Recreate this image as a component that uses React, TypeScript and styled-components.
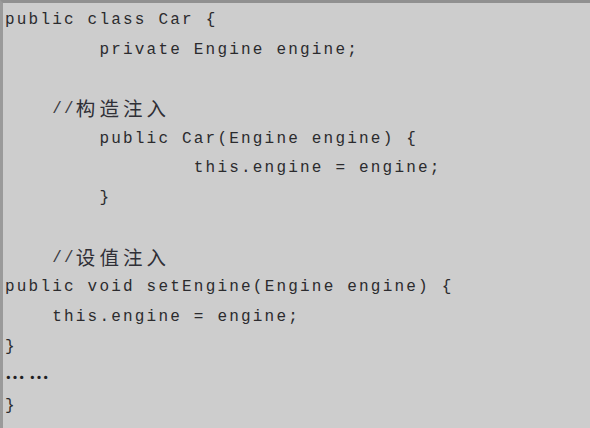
import React from "react";
import styled, { createGlobalStyle } from "styled-components";

const GlobalStyle = createGlobalStyle`
  html, body {
    margin: 0;
    padding: 0;
    background: #cccccc;
  }
  #root {
    width: 590px;
    height: 428px;
  }
`;

const CodeBlock = styled.div`
  box-sizing: border-box;
  width: 590px;
  height: 428px;
  background: #cdcdcd;
  border-top: 3px solid #909090;
  border-left: 3px solid #9a9a9a;
  padding: 3px 0 0 2px;
  font-family: "Liberation Mono", "DejaVu Sans Mono", monospace;
  font-size: 16px;
  letter-spacing: 2.2px;
  color: #2b2b2e;
  overflow: hidden;
`;

const Line = styled.div<{ $indent: number }>`
  height: 29.7px;
  line-height: 29.7px;
  white-space: pre;
  padding-left: ${(p) => p.$indent * 11.8}px;
`;

const Cjk = styled.span`
  font-family: "Noto Sans CJK SC", sans-serif;
  font-size: 19.5px;
  line-height: 1;
  letter-spacing: 4.1px;
  vertical-align: -3px;
  color: #2f2f36;
`;

const Dots = styled.span`
  font-family: "Noto Sans CJK SC", sans-serif;
  font-size: 20px;
  font-weight: 700;
  line-height: 1;
  letter-spacing: 4px;
  vertical-align: -5px;
  color: #1f1f24;
`;

const Comment = styled.span`
  color: #3a3a3f;
`;

type Seg = { t: string; kind?: "cjk" | "dots" | "comment" };
type L = { indent: number; segs: Seg[] };

const lines: L[] = [
  { indent: 0, segs: [{ t: "public class Car {" }] },
  { indent: 8, segs: [{ t: "private Engine engine;" }] },
  { indent: 0, segs: [] },
  { indent: 4, segs: [{ t: "//", kind: "comment" }, { t: "构造注入", kind: "cjk" }] },
  { indent: 8, segs: [{ t: "public Car(Engine engine) {" }] },
  { indent: 16, segs: [{ t: "this.engine = engine;" }] },
  { indent: 8, segs: [{ t: "}" }] },
  { indent: 0, segs: [] },
  { indent: 4, segs: [{ t: "//", kind: "comment" }, { t: "设值注入", kind: "cjk" }] },
  { indent: 0, segs: [{ t: "public void setEngine(Engine engine) {" }] },
  { indent: 4, segs: [{ t: "this.engine = engine;" }] },
  { indent: 0, segs: [{ t: "}" }] },
  { indent: 0, segs: [{ t: "……", kind: "dots" }] },
  { indent: 0, segs: [{ t: "}" }] },
];

function renderSeg(s: Seg, j: number) {
  switch (s.kind) {
    case "cjk":
      return <Cjk key={j}>{s.t}</Cjk>;
    case "dots":
      return <Dots key={j}>{s.t}</Dots>;
    case "comment":
      return <Comment key={j}>{s.t}</Comment>;
    default:
      return <React.Fragment key={j}>{s.t}</React.Fragment>;
  }
}

export default function App() {
  return (
    <>
      <GlobalStyle />
      <CodeBlock>
        {lines.map((l, i) => (
          <Line key={i} $indent={l.indent}>
            {l.segs.length === 0 ? " " : l.segs.map(renderSeg)}
          </Line>
        ))}
      </CodeBlock>
    </>
  );
}
